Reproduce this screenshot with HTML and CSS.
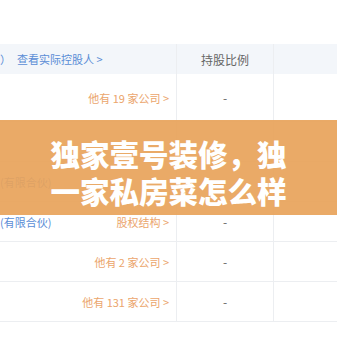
FILE: index.html
```html
<!DOCTYPE html>
<html lang="zh-CN">
<head>
    <meta charset="UTF-8">
    <meta name="viewport" content="width=device-width, initial-scale=1.0">
    <title>独家壹号装修</title>
    <link rel="stylesheet" href="styles.css">
</head>
<body>

    <div class="page">
        <!-- Shareholder table -->
        <div class="holder-table">
            <div class="row head">
                <div class="cell name"><span class="blue">）</span><span class="blue link">查看实际控股人 &gt;</span></div>
                <div class="cell ratio">持股比例</div>
                <div class="cell extra"></div>
            </div>
            <div class="row first">
                <div class="cell name right"><span class="orange">他有 19 家公司 &gt;</span></div>
                <div class="cell ratio">-</div>
                <div class="cell extra"></div>
            </div>
            <div class="row">
                <div class="cell name"></div>
                <div class="cell ratio"></div>
                <div class="cell extra"></div>
            </div>
            <div class="row">
                <div class="cell name"><span class="blue">(有限合伙)</span></div>
                <div class="cell ratio"></div>
                <div class="cell extra"></div>
            </div>
            <div class="row">
                <div class="cell name split"><span class="blue">(有限合伙)</span><span class="orange">股权结构 &gt;</span></div>
                <div class="cell ratio">-</div>
                <div class="cell extra"></div>
            </div>
            <div class="row">
                <div class="cell name right"><span class="orange">他有 2 家公司 &gt;</span></div>
                <div class="cell ratio">-</div>
                <div class="cell extra"></div>
            </div>
            <div class="row">
                <div class="cell name right"><span class="orange">他有 131 家公司 &gt;</span></div>
                <div class="cell ratio">-</div>
                <div class="cell extra"></div>
            </div>
        </div>

        <!-- Title banner over the table -->
        <div class="banner">
            <h1>独家壹号装修，独<br>一家私房菜怎么样</h1>
        </div>
    </div>

</body>
</html>
```

FILE: styles.css
```css
* {
    box-sizing: border-box;
    margin: 0;
    padding: 0;
}

body {
    font-family: "Noto Sans CJK SC", "Noto Sans", sans-serif;
    background-color: #fff;
    width: 337px;
    height: 337px;
    overflow: hidden;
}

.page {
    position: relative;
    height: 337px;
    padding-top: 44px;
}

.holder-table {
    display: flex;
    flex-direction: column;
}

.row {
    display: grid;
    grid-template-columns: 177px 97px 1fr;
    height: 40px;
    border-bottom: 1px solid #eceef1;
}

.row.head {
    height: 30px;
    background-color: #f3f6fa;
    border-bottom: none;
}

.row.first {
    height: 48px;
}

.cell {
    display: flex;
    align-items: center;
    font-size: 11px;
    border-right: 1px solid #eceef1;
}

.cell.extra {
    border-right: none;
}

.cell.name {
    padding-right: 7px;
}

.cell.right {
    justify-content: flex-end;
}

.cell.split {
    justify-content: space-between;
}

.cell.ratio {
    justify-content: center;
    color: #666;
    font-size: 12px;
}

.blue {
    color: #5a8dd6;
}

.link {
    margin-left: 6px;
}

.orange {
    color: #eba56c;
}

.banner {
    position: absolute;
    left: 0;
    top: 120px;
    width: 100%;
    height: 95px;
    padding-top: 15px;
    background-color: rgba(232, 163, 90, 0.92);
}

.banner h1 {
    color: #fff;
    font-size: 29.5px;
    font-weight: 900;
    line-height: 37px;
    text-align: center;
}
```
